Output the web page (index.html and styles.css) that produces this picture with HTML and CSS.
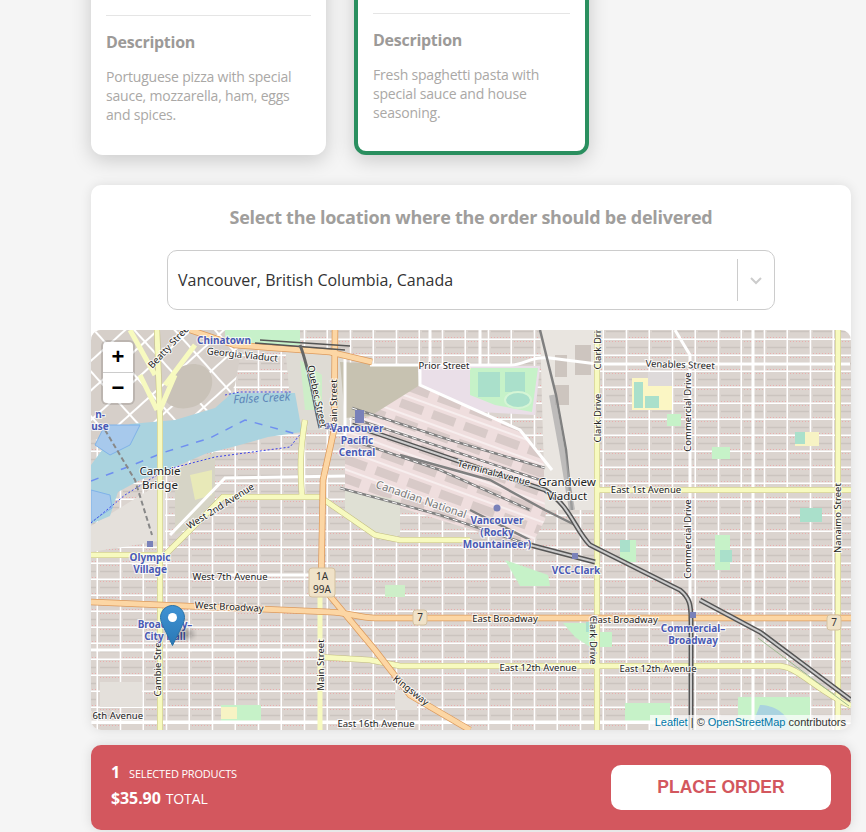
FILE: index.html
```html
<!DOCTYPE html>
<html lang="en">
<head>
    <meta charset="UTF-8">
    <meta name="viewport" content="width=device-width, initial-scale=1.0">
    <title>Order</title>
    <link rel="stylesheet" href="styles.css">
</head>
<body>
    <div class="page">
        <div class="cards">
            <div class="card">
                <hr class="card-line">
                <h3>Description</h3>
                <p>Portuguese pizza with special sauce, mozzarella, ham, eggs and spices.</p>
            </div>
            <div class="card selected">
                <hr class="card-line">
                <h3>Description</h3>
                <p>Fresh spaghetti pasta with special sauce and house seasoning.</p>
            </div>
        </div>

        <div class="panel">
            <h2>Select the location where the order should be delivered</h2>
            <div class="select">
                <span class="select-value">Vancouver, British Columbia, Canada</span>
                <span class="select-sep"></span>
                <svg class="select-arrow" width="20" height="20" viewBox="0 0 20 20"><path d="M5 8l5 5 5-5" fill="none" stroke="#ccc" stroke-width="2"/></svg>
            </div>
            <div class="map">
                <svg class="map-tiles" width="760" height="400" viewBox="91 330 760 400">
                    <defs>
                        <pattern id="blocks" width="46" height="16" patternUnits="userSpaceOnUse" x="6" y="4">
                            <rect width="46" height="16" fill="#dbd4cf"/>
                            <path d="M2 7.500h19M25 7.500h19" stroke="#cbc4bf" stroke-width="1.500"/>
                            <path d="M2 1.500h19M25 13.500h19" stroke="#ee9c9c" stroke-width="1" stroke-dasharray="1 2" opacity=".7"/>
                            <path d="M0 15.250h46" stroke="#fff" stroke-width="1.500"/>
                            <path d="M22.500 0v16M45.250 0v16" stroke="#fff" stroke-width="1.500"/>
                        </pattern>
                        <pattern id="downtown" width="30" height="22" patternUnits="userSpaceOnUse" patternTransform="rotate(-42)">
                            <rect width="30" height="22" fill="#d6cfc9"/>
                            <path d="M0 21h30M29 0v22" stroke="#fff" stroke-width="2"/>
                        </pattern>
                        <pattern id="yard" width="34" height="18" patternUnits="userSpaceOnUse" patternTransform="rotate(20)">
                            <rect width="34" height="18" fill="#efdede"/>
                            <rect x="4" y="3" width="24" height="9" fill="#d8cac8"/>
                            <path d="M0 17h34" stroke="#fff" stroke-width="1"/>
                        </pattern>
                        <linearGradient id="pinFill" x1="0" y1="0" x2="0" y2="1">
                            <stop offset="0" stop-color="#3f93d4"/>
                            <stop offset="1" stop-color="#2a78b5"/>
                        </linearGradient>
                        <filter id="pinShadow"><feGaussianBlur stdDeviation="2.500"/></filter>
                    </defs>

                    <rect x="91" y="330" width="760" height="400" fill="url(#blocks)"/>

                    <!-- areas -->
                    <path d="M91 330H245L235 385L215 420L150 430L91 440Z" fill="url(#downtown)"/>
                    <path d="M170 375C190 355 215 365 212 385C208 410 175 415 165 400Z" fill="#c9c2b8"/>
                    <path d="M225 330H300V345H225Z" fill="#c7f1ca"/>
                    <path d="M285 345L345 350L350 430L300 430L290 400Z" fill="#dedbd4"/>
                    <path d="M300 360L322 375V410L305 410Z" fill="#cdeec8"/>
                    <path d="M340 362L418 366L420 412L345 418Z" fill="#c7c2b1"/>
                    <path d="M420 385L520 430L552 470L545 520L530 548L440 520L345 490L345 432Z" fill="url(#yard)"/>
                    <path d="M418 366H540L535 415L480 412L420 385Z" fill="#eadfe8"/>
                    <path d="M470 368H538L532 412L495 405L470 395Z" fill="#c6f2c8"/>
                    <rect x="478" y="372" width="22" height="25" fill="#aae0cb"/>
                    <rect x="505" y="372" width="20" height="20" fill="#aae0cb"/>
                    <ellipse cx="518" cy="400" rx="13" ry="8" fill="#aae0cb" stroke="#d5f5d5" stroke-width="2"/>
                    <path d="M540 330H596V510H545Z" fill="#e9e5e0"/>
                    <rect x="555" y="385" width="14" height="20" fill="#cdc5bf"/>
                    <rect x="575" y="345" width="16" height="30" fill="#cdc5bf"/>
                    <rect x="555" y="355" width="12" height="22" fill="#cdc5bf"/>
                    <path d="M632 378H672V410H632Z" fill="#fbf6c4"/>
                    <rect x="648" y="372" width="24" height="14" fill="#dedada"/>
                    <rect x="645" y="396" width="14" height="12" fill="#aae0cb"/>
                    <rect x="634" y="382" width="9" height="26" fill="#aae0cb"/>
                    <rect x="667" y="414" width="14" height="12" fill="#c6f2c8"/>
                    <rect x="712" y="447" width="18" height="12" fill="#c6f2c8"/>
                    <rect x="795" y="432" width="24" height="14" fill="#f7f3c4"/>
                    <rect x="795" y="432" width="10" height="12" fill="#aae0cb"/>
                    <rect x="800" y="508" width="22" height="14" fill="#aae0cb"/>
                    <rect x="620" y="540" width="16" height="22" fill="#c6f2c8"/>
                    <rect x="620" y="540" width="10" height="12" fill="#aae0cb"/>
                    <rect x="715" y="535" width="15" height="35" fill="#c6f2c8"/>
                    <rect x="720" y="550" width="12" height="12" fill="#aae0cb"/>
                    <path d="M505 560L548 575L550 586H520Z" fill="#c6f2c8"/>
                    <path d="M563 623H585L592 632H612V647H590L575 637Z" fill="#c6f2c8"/>
                    <rect x="586" y="622" width="12" height="10" fill="#aae0cb"/>
                    <path d="M738 697H810V730H738Z" fill="#c6f2c8"/>
                    <path d="M760 705C775 705 790 715 790 730H750Z" fill="#aad3df"/>
                    <rect x="625" y="703" width="45" height="20" fill="#c6f2c8"/>
                    <rect x="221" y="705" width="40" height="16" fill="#c6f2c8"/>
                    <rect x="221" y="707" width="16" height="12" fill="#f7f3c4"/>
                    <rect x="100" y="682" width="42" height="25" fill="#e4e0db"/>
                    <rect x="395" y="690" width="22" height="20" fill="#e4e0db"/>
                    <path d="M175 470L215 452V515L175 535Z" fill="#d6d4c6"/>
                    <path d="M190 475L212 470V495L195 500Z" fill="#e8e9b8"/>
                    <path d="M91 526L165 480V540L135 545L91 552Z" fill="#e4e0db"/>
                    <path d="M345 515L380 540L400 535L400 500L345 490Z" fill="#dfe0d4"/>
                    <rect x="385" y="585" width="20" height="12" fill="#cdeec8"/>

                    <!-- water -->
                    <path d="M232 393H295L302 432L268 437L236 446L205 454L168 470L140 480L118 492L110 516L91 524V465L105 446L130 424L175 420L215 408Z" fill="#aad3df"/>
                    <path d="M91 490L110 495L112 508L91 522Z" fill="#a7c9ec" stroke="#7fb2e8" stroke-width="1"/>
                    <path d="M105 425L140 425L130 445L110 455L95 445Z" fill="#a7c9ec" stroke="#7fb2e8" stroke-width="1"/>
                    <path d="M91 481L125 468L165 452L210 438L245 420L300 435" fill="none" stroke="#6f8ff0" stroke-width="1.500" stroke-dasharray="8 8"/>
                    <path d="M225 395L240 392H292" fill="none" stroke="#3b44e8" stroke-width="1" stroke-dasharray="2 2"/>
                    <path d="M91 523L125 495L165 470L215 457L290 447L302 432" fill="none" stroke="#3b44e8" stroke-width="1" stroke-dasharray="2 2"/>
                    <path d="M105 430L135 480L152 535" fill="none" stroke="#888" stroke-width="2" stroke-dasharray="5 3"/>

                    <!-- white streets -->
                    <g fill="none" stroke="#fff" stroke-width="3">
                        <path d="M370 365H510C525 365 530 356 550 358L597 364H850"/>
                        <path d="M675 330L690 355V730"/>
                        <path d="M753 330V730"/>
                        <path d="M170 535L225 478L345 476"/>
                        <path d="M91 650H320"/>
                        <path d="M225 575H310"/>
                        <path d="M91 722H320L470 722H700"/>
                        <path d="M345 355L345 440M420 370V385L520 430L552 470"/>
                        <path d="M480 330V365M430 330V365"/>
                    </g>

                    <!-- rail -->
                    <g fill="none" stroke="#808080" stroke-width="2.500">
                        <path d="M352 408L450 440L545 468"/>
                        <path d="M352 418L450 450L540 480"/>
                        <path d="M340 488L440 515L530 545"/>
                        <path d="M345 438L440 470L530 510"/>
                        <path d="M540 330L556 395L566 450L572 510"/>
                        <path d="M400 455L490 480L545 510L575 525"/>
                        <path d="M470 510L530 540"/>
                    </g>
                    <path d="M552 395L562 450L572 510" fill="none" stroke="#aaa" stroke-width="6" opacity=".7"/>
                    <g fill="none" stroke="#fff" stroke-width="1" stroke-dasharray="5 4">
                        <path d="M352 408L450 440L545 468"/>
                        <path d="M352 418L450 450L540 480"/>
                        <path d="M340 488L440 515L530 545"/>
                        <path d="M345 438L440 470L530 510"/>
                    </g>

                    <!-- yellow and orange roads -->
                    <g fill="none" stroke="#c2bc7e" stroke-width="6">
                        <path d="M157 330L160 420V730"/>
                        <path d="M91 555H165L223 497H320L375 535L400 540H470"/>
                        <path d="M597 330V730"/>
                        <path d="M838 330V730"/>
                        <path d="M597 490H851"/>
                        <path d="M320 657L370 660L400 666H780C800 668 815 690 851 706"/>
                        <path d="M305 420C300 450 300 470 302 497"/>
                    </g>
                    <g fill="none" stroke="#f7fabf" stroke-width="5">
                        <path d="M157 330L160 420V730"/>
                        <path d="M91 555H165L223 497H320L375 535L400 540H470"/>
                        <path d="M597 330V730"/>
                        <path d="M838 330V730"/>
                        <path d="M597 490H851"/>
                        <path d="M320 657L370 660L400 666H780C800 668 815 690 851 706"/>
                        <path d="M305 420C300 450 300 470 302 497"/>
                        <path d="M140 375L157 410M175 375L160 410"/>
                        <path d="M130 330L155 375M195 345L165 385"/>
                    </g>
                    <path d="M320 590V730" fill="none" stroke="#f7fabf" stroke-width="5"/>
                    <g fill="none" stroke="#dd9a5c" stroke-width="6.500">
                        <path d="M335 330L334 430L323 480L321 590"/>
                        <path d="M91 602L330 612C345 612 360 618 375 618H851"/>
                        <path d="M325 590L375 650L410 695L470 730"/>
                        <path d="M190 330L235 345L330 352L372 362"/>
                    </g>
                    <g fill="none" stroke="#fcd6a4" stroke-width="5">
                        <path d="M335 330L334 430L323 480L321 590"/>
                        <path d="M91 602L330 612C345 612 360 618 375 618H851"/>
                        <path d="M325 590L375 650L410 695L470 730"/>
                        <path d="M190 330L235 345L330 352L372 362"/>
                    </g>
                    <path d="M255 343L345 350M260 340L350 346" fill="none" stroke="#555" stroke-width="1.500"/>
                    <path d="M300 345C310 370 315 410 320 428" fill="none" stroke="#666" stroke-width="3"/>

                    <!-- skytrain and terminal -->
                    <g fill="none" stroke="#555" stroke-width="5">
                        <path d="M352 425L470 465L545 490C570 505 575 530 590 545L680 590C690 598 691 605 691 620V730"/>
                        <path d="M700 600L760 632L851 700"/>
                        <path d="M530 545L595 562"/>
                    </g>
                    <g fill="none" stroke="#ccc" stroke-width="2">
                        <path d="M352 425L470 465L545 490C570 505 575 530 590 545L680 590C690 598 691 605 691 620V730"/>
                        <path d="M700 600L760 632L851 700"/>
                        <path d="M530 545L595 562"/>
                    </g>
                    <path d="M760 632L851 700" fill="none" stroke="#9db88f" stroke-width="1" transform="translate(-2 6)"/>

                    <!-- station squares -->
                    <g fill="#7981b9">
                        <rect x="355" y="410" width="9" height="13"/>
                        <rect x="325" y="423" width="6" height="6"/>
                        <rect x="147" y="541" width="6" height="6"/>
                        <rect x="572" y="553" width="6" height="6"/>
                        <rect x="690" y="612" width="6" height="6"/>
                        <circle cx="497" cy="508" r="3.500"/>
                    </g>

                    <!-- labels -->
                    <g class="lbl">
                        <text x="172" y="348" transform="rotate(-47 172 348)" text-anchor="middle">Beatty Street</text>
                        <text x="242" y="358" transform="rotate(6 242 358)" text-anchor="middle">Georgia Viaduct</text>
                        <text x="444" y="369" text-anchor="middle">Prior Street</text>
                        <text x="680" y="368" transform="rotate(2 680 368)" text-anchor="middle">Venables Street</text>
                        <text x="314" y="397" transform="rotate(78 314 397)" text-anchor="middle">Quebec Street</text>
                        <text x="337" y="405" transform="rotate(-90 337 405)" text-anchor="middle">Main Street</text>
                        <text x="601" y="345" transform="rotate(-90 601 345)" text-anchor="middle">Clark Drive</text>
                        <text x="601" y="418" transform="rotate(-90 601 418)" text-anchor="middle">Clark Drive</text>
                        <text x="691" y="412" transform="rotate(-90 691 412)" text-anchor="middle">Commercial Drive</text>
                        <text x="691" y="539" transform="rotate(-90 691 539)" text-anchor="middle">Commercial Drive</text>
                        <text x="841" y="518" transform="rotate(-90 841 518)" text-anchor="middle">Nanaimo Street</text>
                        <text x="222" y="509" transform="rotate(-32 222 509)" text-anchor="middle">West 2nd Avenue</text>
                        <text x="493" y="476" transform="rotate(15 493 476)" text-anchor="middle">Terminal Avenue</text>
                        <text x="646" y="493" text-anchor="middle">East 1st Avenue</text>
                        <text x="230" y="580" text-anchor="middle">West 7th Avenue</text>
                        <text x="229" y="610" transform="rotate(3 229 610)" text-anchor="middle">West Broadway</text>
                        <text x="505" y="622" text-anchor="middle">East Broadway</text>
                        <text x="625" y="623" text-anchor="middle">East Broadway</text>
                        <text x="590" y="640" transform="rotate(90 590 640)" text-anchor="middle">Clark Drive</text>
                        <text x="538" y="671" text-anchor="middle">East 12th Avenue</text>
                        <text x="658" y="672" text-anchor="middle">East 12th Avenue</text>
                        <text x="324" y="665" transform="rotate(-90 324 665)" text-anchor="middle">Main Street</text>
                        <text x="161" y="665" transform="rotate(-90 161 665)" text-anchor="middle">Cambie Street</text>
                        <text x="409" y="693" transform="rotate(38 409 693)" text-anchor="middle">Kingsway</text>
                        <text x="115" y="719" text-anchor="middle">16th Avenue</text>
                        <text x="376" y="727" text-anchor="middle">East 16th Avenue</text>
                    </g>
                    <g class="lbl big">
                        <text x="160" y="475" text-anchor="middle">Cambie</text>
                        <text x="160" y="489" text-anchor="middle">Bridge</text>
                        <text x="567" y="486" text-anchor="middle">Grandview</text>
                        <text x="567" y="500" text-anchor="middle">Viaduct</text>
                    </g>
                    <text class="lbl-rail" x="420" y="503" transform="rotate(19 420 503)" text-anchor="middle">Canadian National</text>
                    <text class="lbl-water" x="262" y="402" transform="rotate(-3 262 402)" text-anchor="middle">False Creek</text>
                    <g class="sta">
                        <text x="224" y="344" text-anchor="middle">Chinatown</text>
                        <text x="100" y="418" text-anchor="middle">n-</text>
                        <text x="100" y="430" text-anchor="middle">use</text>
                        <text x="357" y="432" text-anchor="middle">Vancouver</text>
                        <text x="357" y="444" text-anchor="middle">Pacific</text>
                        <text x="357" y="456" text-anchor="middle">Central</text>
                        <text x="150" y="561" text-anchor="middle">Olympic</text>
                        <text x="150" y="573" text-anchor="middle">Village</text>
                        <text x="497" y="524" text-anchor="middle">Vancouver</text>
                        <text x="497" y="536" text-anchor="middle">(Rocky</text>
                        <text x="497" y="548" text-anchor="middle">Mountaineer)</text>
                        <text x="576" y="574" text-anchor="middle">VCC-Clark</text>
                        <text x="165" y="628" text-anchor="middle">Broadway–</text>
                        <text x="165" y="640" text-anchor="middle">City Hall</text>
                        <text x="693" y="632" text-anchor="middle">Commercial–</text>
                        <text x="693" y="644" text-anchor="middle">Broadway</text>
                    </g>

                    <!-- route shields -->
                    <g class="shield">
                        <rect x="309" y="568" width="26" height="29" rx="3"/>
                        <text x="322" y="580" text-anchor="middle">1A</text>
                        <text x="322" y="593" text-anchor="middle">99A</text>
                        <rect x="413" y="610" width="14" height="15" rx="3"/>
                        <text x="420" y="621" text-anchor="middle">7</text>
                        <rect x="827" y="615" width="14" height="15" rx="3"/>
                        <text x="834" y="626" text-anchor="middle">7</text>
                    </g>

                    <!-- marker -->
                    <ellipse cx="180" cy="634" rx="14" ry="6" fill="#000" opacity=".25" filter="url(#pinShadow)"/>
                    <g transform="translate(160 605)">
                        <path d="M12.500.5C5.900.5.5 5.900.5 12.500c0 2.500 1 5.500 2.300 8l9.700 20 9.700-20c1.300-2.500 2.300-5.500 2.300-8C24.500 5.900 19.100.5 12.500.5z" fill="url(#pinFill)" stroke="#2b73a8"/>
                        <circle cx="12.500" cy="12.500" r="4.500" fill="#fff"/>
                    </g>
                </svg>

                <div class="zoom-control">
                    <span class="zoom-btn">+</span>
                    <span class="zoom-btn">&minus;</span>
                </div>
                <div class="attribution"><a>Leaflet</a> | © <a>OpenStreetMap</a> contributors</div>
            </div>
        </div>

        <div class="order-bar">
            <div class="order-info">
                <div class="order-line"><strong>1</strong><span class="small">SELECTED PRODUCTS</span></div>
                <div class="order-line"><strong>$35.90</strong><span>TOTAL</span></div>
            </div>
            <button type="button" class="order-btn">PLACE ORDER</button>
        </div>
    </div>
</body>
</html>
```

FILE: styles.css
```css
html, body {
    height: 100%;
    overflow: hidden;
}

body {
    font-family: "Open Sans", sans-serif;
    margin: 0;
    padding: 0;
    background-color: #f5f5f5;
}

.page {
    width: 760px;
    margin-left: 91px;
}

.cards {
    display: flex;
    gap: 28px;
    margin-top: -100px;
}

.card {
    width: 235px;
    height: 255px;
    box-sizing: border-box;
    padding: 115px 15px 0;
    background-color: #fff;
    border-radius: 12px;
    box-shadow: 0 5px 20px rgba(0, 0, 0, 0.18);
}

.card.selected {
    padding: 109px 15px 0;
    border: 4px solid #2a8f5f;
}

.card-line {
    margin: 0;
    border: 0;
    border-top: 1px solid #e5e5e5;
}

.card h3 {
    margin: 15px 0 14px;
    font-size: 16px;
    line-height: 22px;
    font-weight: 700;
    letter-spacing: -0.27px;
    color: #9c9a98;
}

.card p {
    margin: 0;
    font-size: 14px;
    line-height: 19px;
    letter-spacing: -0.2px;
    color: #aaa8a6;
}

.panel {
    height: 545px;
    margin-top: 30px;
    background-color: #fff;
    border-radius: 10px;
    box-shadow: 0 0 12px rgba(0, 0, 0, 0.1);
}

.panel h2 {
    margin: 0;
    padding-top: 20px;
    height: 45px;
    font-size: 18px;
    line-height: 25px;
    font-weight: 700;
    letter-spacing: -0.27px;
    text-align: center;
    color: #a09e9c;
}

.select {
    display: flex;
    align-items: center;
    width: 608px;
    height: 60px;
    box-sizing: border-box;
    margin: 0 auto 20px;
    padding: 0 8px 0 10px;
    border: 1px solid #ccc;
    border-radius: 10px;
}

.select-value {
    flex: 1;
    font-size: 16px;
    color: #333;
}

.select-sep {
    width: 1px;
    height: 42px;
    margin-right: 8px;
    background-color: #ccc;
}

.select-arrow {
    display: block;
}

.map {
    position: relative;
    height: 400px;
    overflow: hidden;
    border-radius: 10px;
}

.map-tiles {
    display: block;
}

.lbl {
    font: 9.5px "Noto Sans", sans-serif;
    fill: #222;
    stroke: rgba(255, 255, 255, 0.8);
    stroke-width: 2px;
    paint-order: stroke;
}

.lbl.big {
    font-size: 11.5px;
}

.lbl-rail {
    font: 11px "Noto Sans", sans-serif;
    fill: #777;
    stroke: rgba(255, 255, 255, 0.8);
    stroke-width: 2px;
    paint-order: stroke;
}

.lbl-water {
    font: italic 11.5px "Noto Sans", sans-serif;
    fill: #5d86b8;
}

.sta {
    font: 700 10px "Noto Sans", sans-serif;
    fill: #4a5ab4;
    stroke: rgba(255, 255, 255, 0.75);
    stroke-width: 2px;
    paint-order: stroke;
}

.shield {
    font: 10px "Noto Sans", sans-serif;
    fill: #333;
}

.shield rect {
    fill: #f0e2c8;
    stroke: #d4c19f;
}

.zoom-control {
    position: absolute;
    left: 12px;
    top: 12px;
    width: 30px;
    background-color: #fff;
    border-radius: 4px;
    box-shadow: 0 0 0 2px rgba(0, 0, 0, 0.12);
}

.zoom-btn {
    display: block;
    height: 30px;
    font: 700 22px/30px "Liberation Sans", sans-serif;
    text-align: center;
    color: #000;
}

.zoom-btn + .zoom-btn {
    border-top: 1px solid #ccc;
}

.attribution {
    position: absolute;
    right: 0;
    bottom: 0;
    padding: 0 5px;
    font: 11px/15px "Liberation Sans", sans-serif;
    color: #333;
    background-color: rgba(255, 255, 255, 0.7);
}

.attribution a {
    color: #0078a8;
}

.order-bar {
    display: flex;
    align-items: center;
    justify-content: space-between;
    height: 85px;
    box-sizing: border-box;
    margin-top: 15px;
    padding: 0 20px;
    color: #fff;
    background-color: #d3575e;
    border-radius: 10px;
    box-shadow: 0 0 12px rgba(0, 0, 0, 0.12);
}

.order-info {
    margin-top: -4px;
}

.order-line {
    display: flex;
    align-items: baseline;
    gap: 5px;
    font-size: 14px;
    line-height: 25px;
    letter-spacing: -0.1px;
}

.order-line strong {
    font-size: 16px;
}

.order-line .small {
    margin-left: 4px;
    font-size: 11px;
    letter-spacing: -0.18px;
}

.order-btn {
    width: 220px;
    height: 45px;
    font: 700 17.5px "Liberation Sans", sans-serif;
    color: #d3575e;
    background-color: #fff;
    border: 0;
    border-radius: 10px;
}
```
